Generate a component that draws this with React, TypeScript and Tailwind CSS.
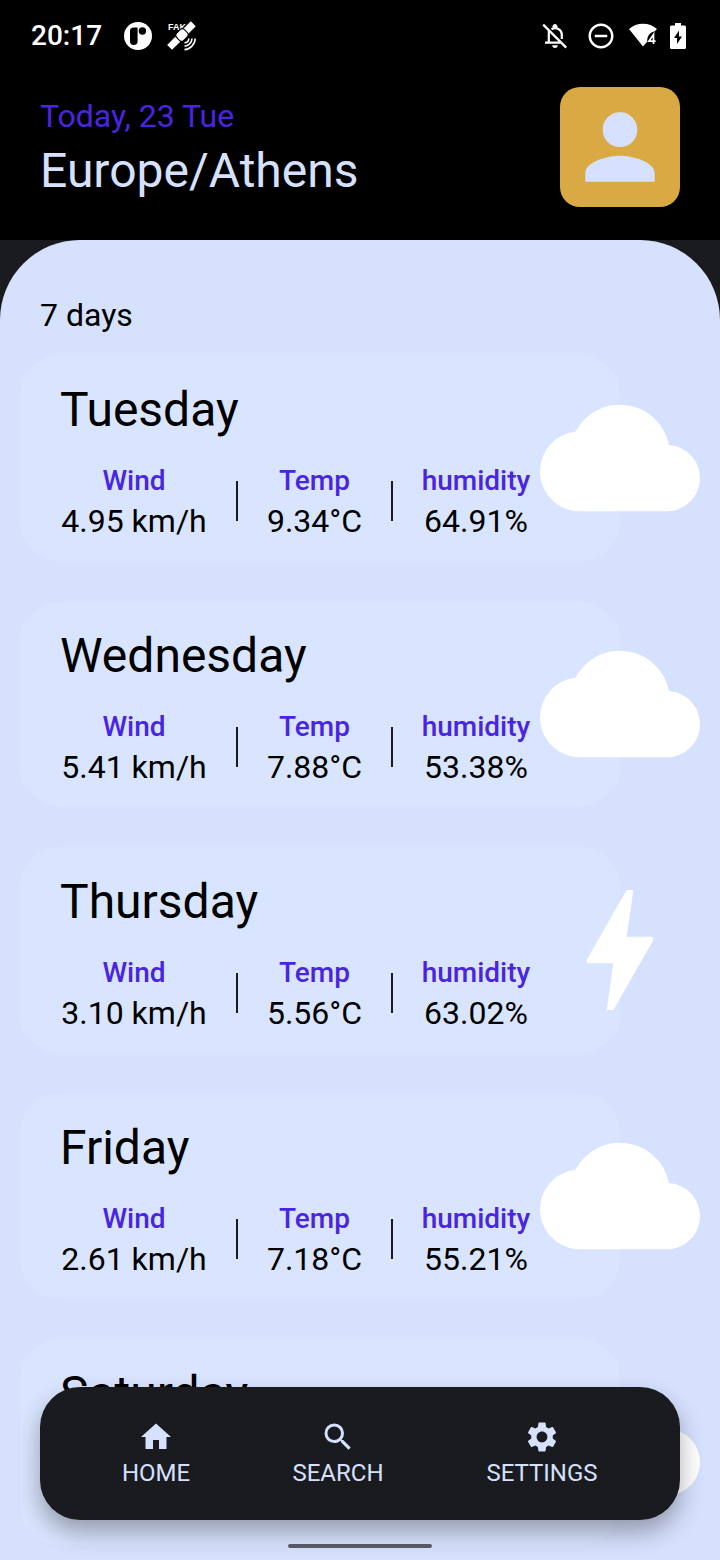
import React from "react";
import { MdCloud, MdHome, MdOutlineDoNotDisturbOn, MdPerson, MdSearch, MdSettings } from "react-icons/md";

type Stats = { wind: string; temp: string; humidity: string };
type Day = { name: string; sky: "cloud" | "storm"; stats?: Stats };

const days: Day[] = [
  { name: "Tuesday", sky: "cloud", stats: { wind: "4.95 km/h", temp: "9.34°C", humidity: "64.91%" } },
  { name: "Wednesday", sky: "cloud", stats: { wind: "5.41 km/h", temp: "7.88°C", humidity: "53.38%" } },
  { name: "Thursday", sky: "storm", stats: { wind: "3.10 km/h", temp: "5.56°C", humidity: "63.02%" } },
  { name: "Friday", sky: "cloud", stats: { wind: "2.61 km/h", temp: "7.18°C", humidity: "55.21%" } },
  { name: "Saturday", sky: "cloud" },
];

const tabs = [
  { label: "HOME", Icon: MdHome },
  { label: "SEARCH", Icon: MdSearch },
  { label: "SETTINGS", Icon: MdSettings },
];

function BoltIcon({ className }: { className?: string }) {
  return (
    <svg viewBox="0 0 24 24" fill="currentColor" className={className} aria-hidden="true">
      <path d="M11 21h-1l1-7H7.45c-.4 0-.57-.3-.38-.65L13 3h1l-1 7h3.55c.4 0 .57.3.38.65z" />
    </svg>
  );
}

function StatusBar() {
  return (
    <div className="flex h-[72px] items-center justify-between pl-[31px] pr-[34px] text-white">
      <div className="flex items-center">
        <time className="text-[28px] font-medium leading-8">20:17</time>
        <svg viewBox="0 0 28 28" className="ml-[22px] size-7" aria-hidden="true">
          <circle cx="14" cy="14" r="14" fill="white" />
          <path d="M6 9a3.6 3.6 0 0 1 3.6-3.6h4v13.8a3.8 3.8 0 0 1-7.6 0z" fill="black" />
          <circle cx="18.4" cy="9" r="3.7" fill="black" />
        </svg>
        <svg viewBox="0 0 32 32" className="ml-[14px] size-8" aria-hidden="true">
          <text x="2" y="10" fill="white" fontSize="9" fontWeight="700" fontFamily="Liberation Sans, sans-serif">
            FAKE
          </text>
          <g transform="translate(16 15) rotate(-45)" fill="white" stroke="black">
            <rect x="4.5" y="-4" width="12" height="8" />
            <rect x="-18" y="-4" width="12.5" height="8" />
            <rect x="-5.5" y="-5" width="11" height="10" rx="3" />
          </g>
          <g fill="none" stroke="white" strokeWidth="1.6">
            <path d="M29.2 18.5a11.500 11.500 0 0 1-10.700 11.100M26 18.500a8 8 0 0 1-7.500 7.700M22.800 18.500a4.500 4.500 0 0 1-4.300 4.300" />
          </g>
        </svg>
      </div>
      <div className="flex items-center">
        <svg viewBox="0 0 26 26" className="size-[26px]" fill="none" stroke="white" strokeWidth="2.2" aria-hidden="true">
          <path d="M1.2 1.6l23 23M6.8 8v11.6M3 19.6h16.5M9.5 6.4c4.5-3 10.3.2 10.3 5.1v4.5" />
          <path d="M10.3 4.5c0-1.5 1-3.5 2.7-3.5s2.7 2 2.7 3.5zM10.3 22.3h5.4a2.7 2.7 0 0 1-5.4 0z" fill="white" stroke="none" />
        </svg>
        <MdOutlineDoNotDisturbOn className="ml-[18px] size-[30px]" aria-hidden="true" />
        <svg viewBox="0 0 30 30" className="ml-3 size-[30px]" aria-hidden="true">
          <path d="M1 8a21 21 0 0 1 28 0l-2.5 2.6c-4 .6-7.3 4.2-7.3 9.2v1L15 25.4z" fill="white" />
          <path d="M25.5 23v-9.6l-4.6 6.8h6.7" fill="none" stroke="white" strokeWidth="1.7" />
        </svg>
        <svg viewBox="0 0 16 26" className="ml-3 h-[26px] w-4" aria-hidden="true">
          <path d="M5 0h6v2.5h3.5A1.5 1.5 0 0 1 16 4v20.5a1.5 1.5 0 0 1-1.5 1.5h-13A1.5 1.5 0 0 1 0 24.5V4a1.5 1.5 0 0 1 1.5-1.5H5z" fill="white" />
          <path d="M9 7.5v6h3L7 21v-6H4z" fill="black" />
        </svg>
      </div>
    </div>
  );
}

function Stat({ label, value }: { label: string; value: string }) {
  return (
    <div className="flex flex-col items-center whitespace-nowrap leading-10">
      <dt className="text-[28px] font-medium text-[#4a25e1]">{label}</dt>
      <dd className="text-[32px]">{value}</dd>
    </div>
  );
}

function DayRow({ day }: { day: Day }) {
  const iconClass = "-ml-20 size-40 shrink-0 text-white";
  return (
    <li className="flex items-center">
      <article className="min-h-[206px] flex-1 rounded-[40px] bg-[#d9e5fe] px-10 pb-5 pt-6">
        <h2 className="text-[48px] leading-[62px]">{day.name}</h2>
        {day.stats && (
          <dl className="mt-5 grid grid-cols-[148px_2px_97px_2px_110px] items-center gap-7">
            <Stat label="Wind" value={day.stats.wind} />
            <div className="h-10 bg-[#1a1b1e]" />
            <Stat label="Temp" value={day.stats.temp} />
            <div className="h-10 bg-[#1a1b1e]" />
            <Stat label="humidity" value={day.stats.humidity} />
          </dl>
        )}
      </article>
      {day.sky === "cloud" ? <MdCloud className={iconClass} aria-hidden="true" /> : <BoltIcon className={iconClass} />}
    </li>
  );
}

export default function App() {
  return (
    <div className="relative flex h-screen flex-col overflow-hidden bg-[#1a1b1e] font-[Roboto,sans-serif] text-black">
      <div className="bg-black">
        <StatusBar />
        <header className="flex items-start justify-between px-10 pb-[33px] pt-[15px]">
          <div className="pt-2">
            <p className="text-[32px] leading-[42px] text-[#4a25e1]">Today, 23 Tue</p>
            <h1 className="text-[48px] leading-[68px] text-[#d6e1ff]">Europe/Athens</h1>
          </div>
          <button
            type="button"
            aria-label="Profile"
            className="flex size-[120px] items-center justify-center rounded-[20px] bg-[#d9a944] text-[#d6e1ff]"
          >
            <MdPerson className="size-[104px]" aria-hidden="true" />
          </button>
        </header>
      </div>

      <main className="min-h-0 flex-1 overflow-y-auto rounded-t-[80px] bg-[#d6e1fe] px-5 pt-[55px] [scrollbar-width:none]">
        <p className="mb-5 px-5 text-[32px] leading-10">7 days</p>
        <ul className="flex flex-col gap-10">
          {days.map((day) => (
            <DayRow key={day.name} day={day} />
          ))}
        </ul>
      </main>

      <nav className="absolute inset-x-10 bottom-10 grid grid-cols-[72px_96px_116px] justify-between rounded-[40px] bg-[#1a1b1e] px-20 pb-[29px] pt-8 text-[#d6e1ff] shadow-[0_12px_24px_rgba(0,0,0,0.32)]">
        {tabs.map(({ label, Icon }) => (
          <button key={label} type="button" className="flex flex-col items-center text-[24px] leading-9">
            <Icon className="size-9" aria-hidden="true" />
            {label}
          </button>
        ))}
      </nav>
      <div className="absolute bottom-3 left-1/2 h-1 w-36 -translate-x-1/2 rounded-full bg-[#555a66]" />
    </div>
  );
}
